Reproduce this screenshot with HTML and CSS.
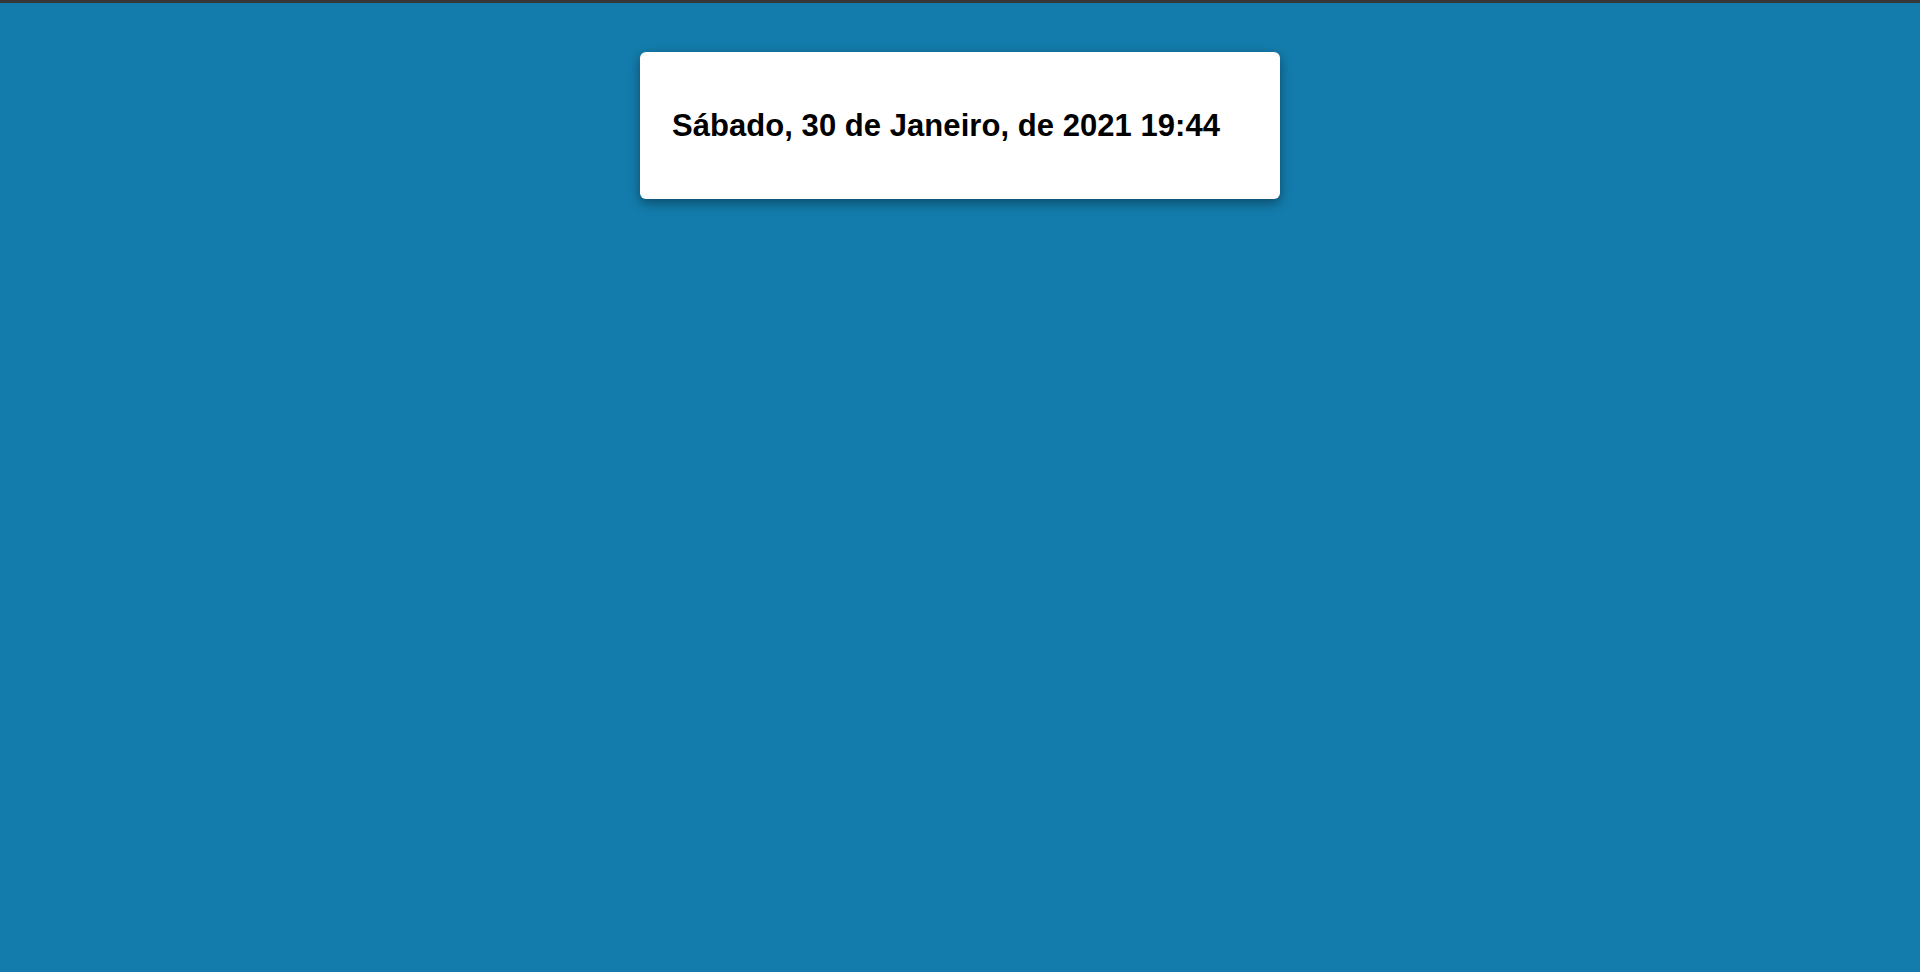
FILE: index.html
```html
<!DOCTYPE html>
<html lang="pt">
<head>
<meta charset="utf-8">
<title>Data</title>
<link rel="stylesheet" href="styles.css">
</head>
<body>
<div class="topbar"></div>
<main class="page">
  <section class="card">
    <h2 class="date">Sábado, 30 de Janeiro, de 2021 19:44</h2>
  </section>
</main>
</body>
</html>
```
FILE: styles.css
```css
html, body {
  margin: 0;
  padding: 0;
  height: 100%;
}
body {
  background: #137cac;
  font-family: "Liberation Sans", Arial, sans-serif;
  overflow: hidden;
}
.topbar {
  height: 3px;
  background: #363739;
}
.page {
  display: flex;
  justify-content: center;
  padding-top: 49px;
}
.card {
  width: 640px;
  box-sizing: border-box;
  background: #ffffff;
  border-radius: 6px;
  box-shadow: 0 4px 12px rgba(0, 0, 0, 0.4);
  padding: 56px 32px 55px;
}
.date {
  margin: 0;
  font-size: 31px;
  line-height: 36px;
  font-weight: bold;
  letter-spacing: 0.05px;
  color: #000;
}
```
